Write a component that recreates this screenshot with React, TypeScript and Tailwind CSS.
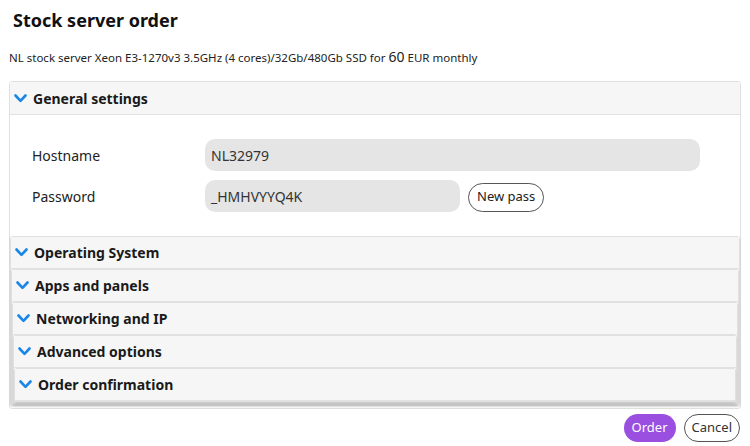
const font = { fontFamily: '"Segoe UI", "Noto Sans", "Open Sans", sans-serif' };

const Chevron = () => (
  <svg width="13" height="9" viewBox="0 0 13 9" className="shrink-0">
    <path d="M1.5 1.5 L6.5 6.8 L11.5 1.5" fill="none" stroke="#1a86e8" strokeWidth="2.6" strokeLinecap="round" strokeLinejoin="round" />
  </svg>
);

const Header = ({ title, tall }: { title: string; tall?: boolean }) => (
  <div
    className={
      (tall ? "h-[33px] " : "h-[32px] ") +
      "flex items-center gap-[6px] border-b border-[#e2e2e2] bg-[#f6f6f6] pl-[4px] text-[14px] font-bold text-[#1a1a1a]"
    }
  >
    <Chevron />
    <span>{title}</span>
  </div>
);

const Item = ({ titles }: { titles: string[] }) => {
  if (titles.length === 0) return null;
  const [first, ...rest] = titles;
  return (
    <div className="rounded-[3px] border border-[#e0e0e0] bg-[#f6f6f6] shadow-[0_1px_2px_rgba(0,0,0,0.12)]">
      <Header title={first} />
      <Item titles={rest} />
    </div>
  );
};

const App = () => {
  return (
    <div className="h-[446px] w-[750px] overflow-hidden bg-white text-[#222]" style={font}>
      <h1 className="pl-[13px] pt-[7px] text-[18px] font-bold leading-[26px] text-[#111]">Stock server order</h1>
      <p className="mt-[16px] pl-[9px] text-[11.5px] leading-[16px] text-[#222]">
        NL stock server Xeon E3-1270v3 3.5GHz (4 cores)/32Gb/480Gb SSD for <span className="text-[14px]">60</span> EUR monthly
      </p>

      {/* accordion */}
      <div className="mx-[9px] mt-[15px] w-[732px] rounded-[3px] border border-[#e0e0e0] bg-white pb-[2px]">
        <Header title="General settings" tall />
        <div className="flex flex-col gap-[9px] bg-white pb-[24px] pl-[22px] pt-[24px] text-[14px]">
          <div className="flex items-center">
            <span className="w-[173px]">Hostname</span>
            <div className="flex h-[32px] w-[495px] items-center rounded-[10px] bg-[#e5e5e5] px-[6px] text-[14px] text-[#333]">NL32979</div>
          </div>
          <div className="flex items-center">
            <span className="w-[173px]">Password</span>
            <div className="flex h-[32px] w-[255px] items-center rounded-[10px] bg-[#e5e5e5] px-[6px] text-[14px] text-[#333]">_HMHVYYQ4K</div>
            <button className="ml-[8px] mt-[2px] h-[29px] rounded-full border border-[#555] px-[8px] text-[13px] text-[#222]">New pass</button>
          </div>
        </div>
        <Item titles={["Operating System", "Apps and panels", "Networking and IP", "Advanced options", "Order confirmation"]} />
      </div>

      <div className="mr-[10px] mt-[5px] flex justify-end gap-[8px] text-[13px]">
        <button className="h-[28px] rounded-full bg-[#9a4fe0] px-[8px] text-white">Order</button>
        <button className="h-[28px] rounded-full border border-[#555] px-[7px] text-[#333]">Cancel</button>
      </div>
    </div>
  );
};

export default App;
